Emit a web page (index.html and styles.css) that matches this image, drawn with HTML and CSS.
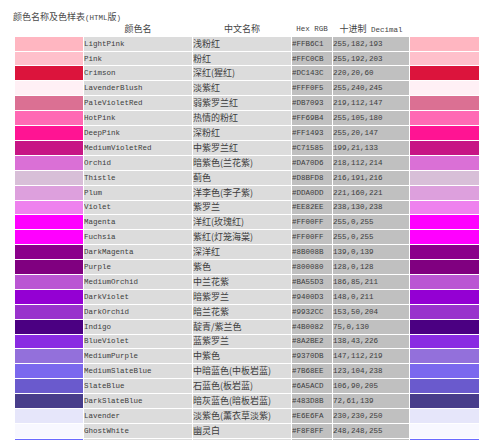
FILE: index.html
```html
<!DOCTYPE html>
<html lang="zh">
<head>
<meta charset="utf-8">
<title>颜色名称及色样表</title>
<link rel="stylesheet" href="styles.css">
</head>
<body>
<div class="title"><span class="cjk">颜色名称及色样表</span><span class="lat">(HTML</span><span class="cjk">版</span><span class="lat">)</span></div>
<table class="colors">
<colgroup>
<col class="c-sw"><col class="c-name"><col class="c-cn"><col class="c-hex"><col class="c-dec"><col class="c-sw2">
</colgroup>
<thead>
<tr class="head">
<th></th>
<th class="cjk">颜色名</th>
<th class="cjk">中文名称</th>
<th class="lat">Hex RGB</th>
<th><span class="cjk">十进制</span><span class="lat"> Decimal</span></th>
<th></th>
</tr>
</thead>
<tbody>
<tr><td class="sw" style="background:#FFB6C1"></td><td class="name">LightPink</td><td class="cn">浅粉红</td><td class="hex">#FFB6C1</td><td class="dec">255,182,193</td><td class="sw" style="background:#FFB6C1"></td></tr>
<tr><td class="sw" style="background:#FFC0CB"></td><td class="name">Pink</td><td class="cn">粉红</td><td class="hex">#FFC0CB</td><td class="dec">255,192,203</td><td class="sw" style="background:#FFC0CB"></td></tr>
<tr><td class="sw" style="background:#DC143C"></td><td class="name">Crimson</td><td class="cn">深红(猩红)</td><td class="hex">#DC143C</td><td class="dec">220,20,60</td><td class="sw" style="background:#DC143C"></td></tr>
<tr><td class="sw" style="background:#FFF0F5"></td><td class="name">LavenderBlush</td><td class="cn">淡紫红</td><td class="hex">#FFF0F5</td><td class="dec">255,240,245</td><td class="sw" style="background:#FFF0F5"></td></tr>
<tr><td class="sw" style="background:#DB7093"></td><td class="name">PaleVioletRed</td><td class="cn">弱紫罗兰红</td><td class="hex">#DB7093</td><td class="dec">219,112,147</td><td class="sw" style="background:#DB7093"></td></tr>
<tr><td class="sw" style="background:#FF69B4"></td><td class="name">HotPink</td><td class="cn">热情的粉红</td><td class="hex">#FF69B4</td><td class="dec">255,105,180</td><td class="sw" style="background:#FF69B4"></td></tr>
<tr><td class="sw" style="background:#FF1493"></td><td class="name">DeepPink</td><td class="cn">深粉红</td><td class="hex">#FF1493</td><td class="dec">255,20,147</td><td class="sw" style="background:#FF1493"></td></tr>
<tr><td class="sw" style="background:#C71585"></td><td class="name">MediumVioletRed</td><td class="cn">中紫罗兰红</td><td class="hex">#C71585</td><td class="dec">199,21,133</td><td class="sw" style="background:#C71585"></td></tr>
<tr><td class="sw" style="background:#DA70D6"></td><td class="name">Orchid</td><td class="cn">暗紫色(兰花紫)</td><td class="hex">#DA70D6</td><td class="dec">218,112,214</td><td class="sw" style="background:#DA70D6"></td></tr>
<tr><td class="sw" style="background:#D8BFD8"></td><td class="name">Thistle</td><td class="cn">蓟色</td><td class="hex">#D8BFD8</td><td class="dec">216,191,216</td><td class="sw" style="background:#D8BFD8"></td></tr>
<tr><td class="sw" style="background:#DDA0DD"></td><td class="name">Plum</td><td class="cn">洋李色(李子紫)</td><td class="hex">#DDA0DD</td><td class="dec">221,160,221</td><td class="sw" style="background:#DDA0DD"></td></tr>
<tr><td class="sw" style="background:#EE82EE"></td><td class="name">Violet</td><td class="cn">紫罗兰</td><td class="hex">#EE82EE</td><td class="dec">238,130,238</td><td class="sw" style="background:#EE82EE"></td></tr>
<tr><td class="sw" style="background:#FF00FF"></td><td class="name">Magenta</td><td class="cn">洋红(玫瑰红)</td><td class="hex">#FF00FF</td><td class="dec">255,0,255</td><td class="sw" style="background:#FF00FF"></td></tr>
<tr><td class="sw" style="background:#FF00FF"></td><td class="name">Fuchsia</td><td class="cn">紫红(灯笼海棠)</td><td class="hex">#FF00FF</td><td class="dec">255,0,255</td><td class="sw" style="background:#FF00FF"></td></tr>
<tr><td class="sw" style="background:#8B008B"></td><td class="name">DarkMagenta</td><td class="cn">深洋红</td><td class="hex">#8B008B</td><td class="dec">139,0,139</td><td class="sw" style="background:#8B008B"></td></tr>
<tr><td class="sw" style="background:#800080"></td><td class="name">Purple</td><td class="cn">紫色</td><td class="hex">#800080</td><td class="dec">128,0,128</td><td class="sw" style="background:#800080"></td></tr>
<tr><td class="sw" style="background:#BA55D3"></td><td class="name">MediumOrchid</td><td class="cn">中兰花紫</td><td class="hex">#BA55D3</td><td class="dec">186,85,211</td><td class="sw" style="background:#BA55D3"></td></tr>
<tr><td class="sw" style="background:#9400D3"></td><td class="name">DarkViolet</td><td class="cn">暗紫罗兰</td><td class="hex">#9400D3</td><td class="dec">148,0,211</td><td class="sw" style="background:#9400D3"></td></tr>
<tr><td class="sw" style="background:#9932CC"></td><td class="name">DarkOrchid</td><td class="cn">暗兰花紫</td><td class="hex">#9932CC</td><td class="dec">153,50,204</td><td class="sw" style="background:#9932CC"></td></tr>
<tr><td class="sw" style="background:#4B0082"></td><td class="name">Indigo</td><td class="cn">靛青/紫兰色</td><td class="hex">#4B0082</td><td class="dec">75,0,130</td><td class="sw" style="background:#4B0082"></td></tr>
<tr><td class="sw" style="background:#8A2BE2"></td><td class="name">BlueViolet</td><td class="cn">蓝紫罗兰</td><td class="hex">#8A2BE2</td><td class="dec">138,43,226</td><td class="sw" style="background:#8A2BE2"></td></tr>
<tr><td class="sw" style="background:#9370DB"></td><td class="name">MediumPurple</td><td class="cn">中紫色</td><td class="hex">#9370DB</td><td class="dec">147,112,219</td><td class="sw" style="background:#9370DB"></td></tr>
<tr><td class="sw" style="background:#7B68EE"></td><td class="name">MediumSlateBlue</td><td class="cn">中暗蓝色(中板岩蓝)</td><td class="hex">#7B68EE</td><td class="dec">123,104,238</td><td class="sw" style="background:#7B68EE"></td></tr>
<tr><td class="sw" style="background:#6A5ACD"></td><td class="name">SlateBlue</td><td class="cn">石蓝色(板岩蓝)</td><td class="hex">#6A5ACD</td><td class="dec">106,90,205</td><td class="sw" style="background:#6A5ACD"></td></tr>
<tr><td class="sw" style="background:#483D8B"></td><td class="name">DarkSlateBlue</td><td class="cn">暗灰蓝色(暗板岩蓝)</td><td class="hex">#483D8B</td><td class="dec">72,61,139</td><td class="sw" style="background:#483D8B"></td></tr>
<tr><td class="sw" style="background:#E6E6FA"></td><td class="name">Lavender</td><td class="cn">淡紫色(薰衣草淡紫)</td><td class="hex">#E6E6FA</td><td class="dec">230,230,250</td><td class="sw" style="background:#E6E6FA"></td></tr>
<tr><td class="sw" style="background:#F8F8FF"></td><td class="name">GhostWhite</td><td class="cn">幽灵白</td><td class="hex">#F8F8FF</td><td class="dec">248,248,255</td><td class="sw" style="background:#F8F8FF"></td></tr>
<tr><td class="sw" style="background:#6A6AFF"></td><td class="name">Blue</td><td class="cn">纯蓝</td><td class="hex">#0000FF</td><td class="dec">0,0,255</td><td class="sw" style="background:#6A6AFF"></td></tr>
</tbody>
</table>
</body>
</html>
```

FILE: styles.css
```css
html, body {
  margin: 0;
  padding: 0;
  background: #ffffff;
}

body {
  padding: 11px 0 0 13px;
  color: #3c3c3c;
  font-family: "Liberation Mono", "Noto Sans CJK SC", monospace;
}

.cjk {
  font-family: "Noto Sans CJK SC", sans-serif;
  font-size: 9px;
}

.lat {
  font-family: "Liberation Mono", monospace;
  font-size: 7.5px;
}

.title {
  height: 10px;
  line-height: 10px;
  color: #4a4a4a;
  white-space: nowrap;
}

.colors {
  margin-left: 1px;
  margin-top: -0.2px;
  border-collapse: separate;
  border-spacing: 1px;
  table-layout: fixed;
  width: 466px;
}

.c-sw { width: 68px; }
.c-name { width: 108px; }
.c-cn { width: 98px; }
.c-hex { width: 40px; }
.c-dec { width: 76px; }
.c-sw2 { width: 69px; }

.colors tr {
  height: 13.9px;
}

.colors th,
.colors td {
  padding: 0;
  line-height: 10px;
  white-space: nowrap;
  overflow: hidden;
  vertical-align: middle;
}

.head th {
  font-weight: normal;
  text-align: center;
  color: #444;
}

.name,
.hex,
.dec {
  font-size: 7.5px;
  text-align: left;
}

.name,
.cn {
  background: #dcdcdc;
}

.hex,
.dec {
  background: #c0c0c0;
}

.cn {
  font-family: "Noto Sans CJK SC", sans-serif;
  font-size: 9px;
}
```
